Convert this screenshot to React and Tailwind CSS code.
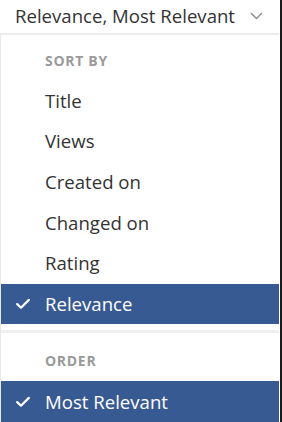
export default function App() {
  const items = ["Title", "Views", "Created on", "Changed on", "Rating"];
  const Check = () => (
    <svg width="14" height="11" viewBox="0 0 14 11" className="absolute left-[15px] top-1/2 -translate-y-1/2">
      <polyline points="1.2,5.6 5,9.2 12.8,1.4" fill="none" stroke="white" strokeWidth="2.2" strokeLinecap="round" strokeLinejoin="round" />
    </svg>
  );
  return (
    <div className="w-[282px] h-[422px] overflow-hidden bg-white flex" style={{ fontFamily: '"Open Sans", sans-serif' }}>
      <div className="w-[279px] flex flex-col">
        <div className="h-[33px] flex items-center justify-between pl-[15px] pr-[16px] text-[18.6px] text-[#333]">
          <span>Relevance, Most Relevant</span>
          <svg width="13" height="8" viewBox="0 0 13 8">
            <polyline points="1,1 6.5,6.5 12,1" fill="none" stroke="#8a8a8a" strokeWidth="1.4" />
          </svg>
        </div>
        <div className="h-[2px] bg-[#ececec]" />
        <div className="flex-1 flex flex-col border-l border-[#e8e8e8]">
          <div className="h-[46px] flex items-center pt-[5px] pl-[44px] text-[14px] font-bold tracking-[0.7px] text-[#9a9a9a]">SORT BY</div>
          {items.map((t) => (
            <div key={t} className="h-[40.6px] flex items-center pl-[44px] text-[18.6px] text-[#333]">{t}</div>
          ))}
          <div className="relative h-[40.5px] flex items-center pl-[44px] text-[18.6px] text-white bg-[#385a93]">
            <Check />
            Relevance
          </div>
          <div className="h-[6px]" />
          <div className="h-[3px] bg-[#efefef]" />
          <div className="h-[48px] flex items-center pt-[6px] pl-[44px] text-[14px] font-bold tracking-[0.7px] text-[#9a9a9a]">ORDER</div>
          <div className="relative h-[41px] flex items-center pl-[44px] text-[18.6px] text-white bg-[#385a93]">
            <Check />
            Most Relevant
          </div>
        </div>
      </div>
      <div className="w-[1px] bg-white" />
      <div className="w-[2px] bg-[#1a1a1a]" />
    </div>
  );
}
